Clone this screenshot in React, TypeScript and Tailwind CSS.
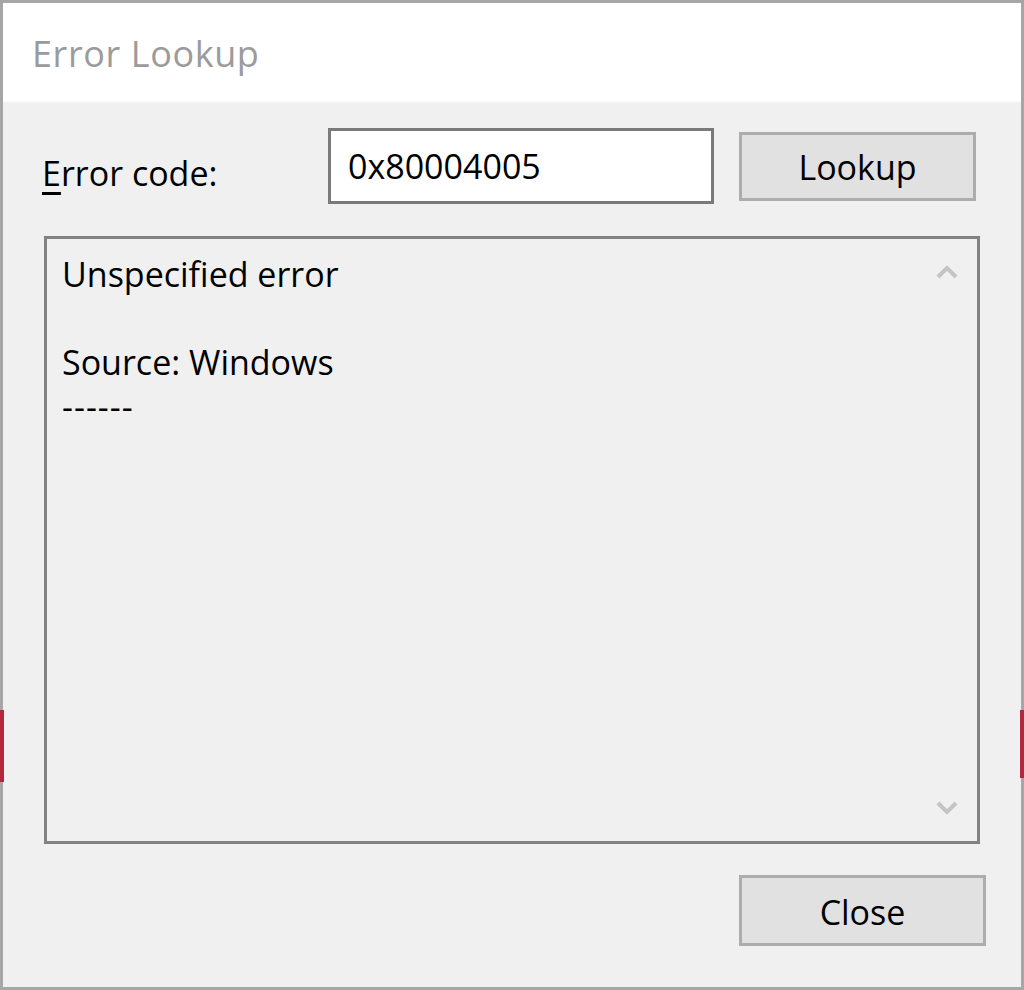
export default function App() {
  return (
    <div
      className="relative w-[1024px] h-[990px] bg-[#f0f0f0] border-[3px] border-[#a6a6a6] flex flex-col"
      style={{ fontFamily: '"Open Sans", "Noto Sans", sans-serif' }}
    >
      {/* Title bar */}
      <div className="h-[100px] bg-white flex items-center pl-[29px] border-b-2 border-[#f7f7f7] shrink-0">
        <span className="text-[36px] text-[#9b9b9b] tracking-[0.6px] pt-[3px]">Error Lookup</span>
      </div>

      {/* Error code row */}
      <div className="flex items-center pl-[39px] mt-[25px]">
        <label className="w-[286px] pt-[14px] text-[34px] text-black">
          <span className="underline underline-offset-[6px] decoration-[3px]">E</span>rror code:
        </label>
        <div className="w-[386px] h-[76px] bg-white border-[3px] border-[#7a7a7a] flex items-center pl-[17px]">
          <span className="text-[34px] text-black">0x80004005</span>
        </div>
        <button className="ml-[25px] w-[237px] h-[69px] bg-[#e1e1e1] border-[3px] border-[#adadad] flex items-center justify-center pt-[3px] text-[34px] text-black">
          Lookup
        </button>
      </div>

      {/* Result text box */}
      <div className="ml-[41px] mt-[32px] w-[936px] h-[608px] border-[3px] border-[#828282] bg-[#f0f0f0] flex">
        <div className="flex-1 pl-[15px] pt-[13px] text-[34px] leading-[44px] text-black">
          <p>Unspecified error</p>
          <p>&nbsp;</p>
          <p>Source: Windows</p>
          <p className="tracking-[1px]">------</p>
        </div>
        <div className="w-[60px] flex flex-col justify-between items-center py-[26px]">
          <svg width="22" height="14" viewBox="0 0 22 14">
            <path d="M2 12 L11 3 L20 12" fill="none" stroke="#c4c4c4" strokeWidth="4" />
          </svg>
          <svg width="22" height="14" viewBox="0 0 22 14">
            <path d="M2 2 L11 11 L20 2" fill="none" stroke="#c4c4c4" strokeWidth="4" />
          </svg>
        </div>
      </div>

      {/* Close */}
      <div className="flex justify-end pr-[35px] mt-[31px]">
        <button className="w-[247px] h-[71px] bg-[#e1e1e1] border-[3px] border-[#adadad] flex items-center justify-center pt-[3px] text-[34px] text-black">
          Close
        </button>
      </div>

      {/* edge marks */}
      <div className="absolute left-[-3px] top-[707px] w-[4px] h-[72px] bg-[#b3283c]" />
      <div className="absolute right-[-3px] top-[707px] w-[4px] h-[68px] bg-[#b3283c]" />
    </div>
  )
}
